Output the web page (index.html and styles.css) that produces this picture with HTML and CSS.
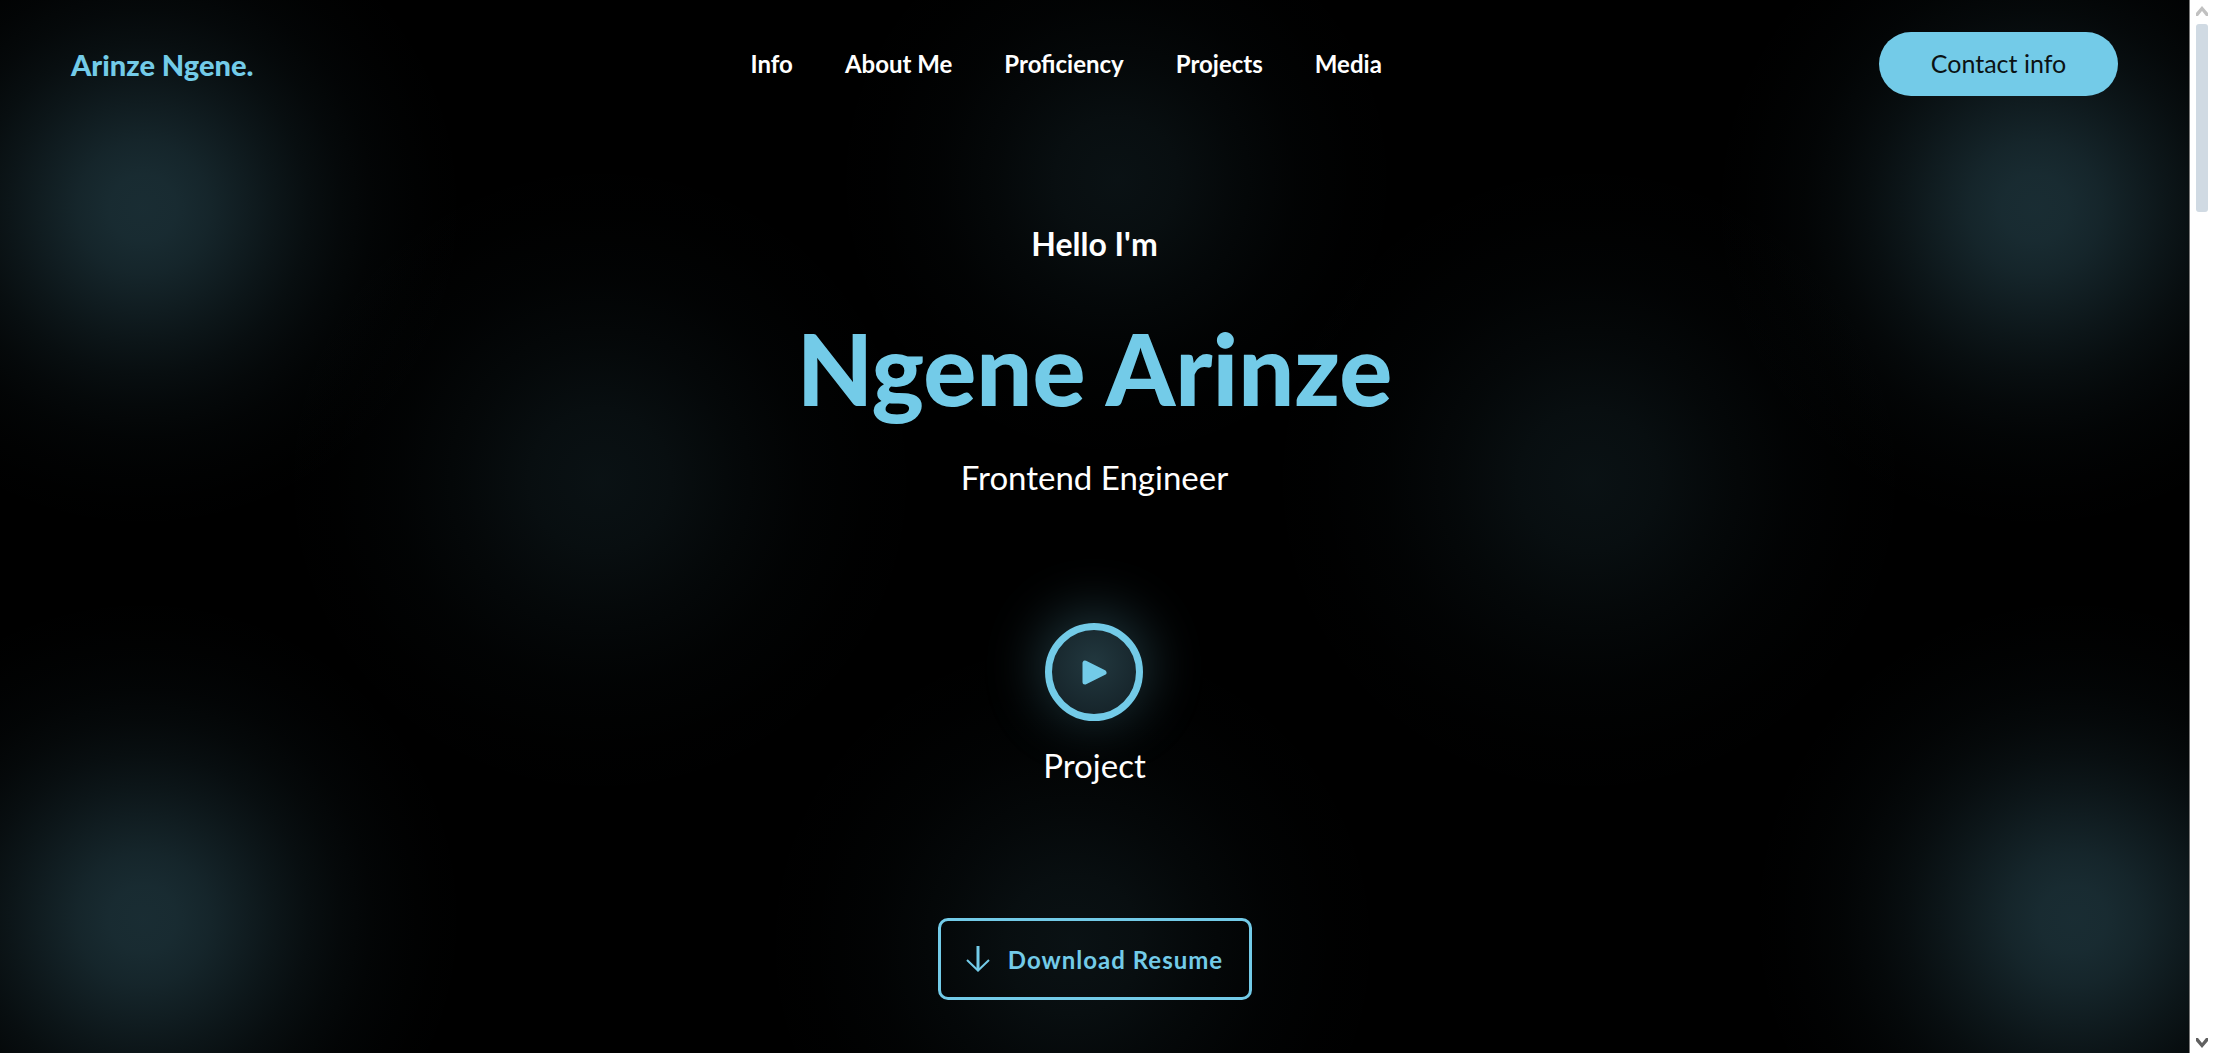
FILE: index.html
```html
<!DOCTYPE html>
<html lang="en">
<head>
<meta charset="utf-8">
<meta name="viewport" content="width=device-width, initial-scale=1">
<title>Arinze Ngene</title>
<link rel="stylesheet" href="styles.css">
</head>
<body>
<div class="page">
  <header class="header">
    <a class="logo" href="#home">Arinze Ngene.</a>
    <nav class="nav" aria-label="Main">
      <a href="#info">Info</a>
      <a href="#about">About Me</a>
      <a href="#proficiency">Proficiency</a>
      <a href="#projects">Projects</a>
      <a href="#media">Media</a>
    </nav>
    <button class="contact" type="button">Contact info</button>
  </header>
  <main class="hero" id="home">
    <p class="greeting">Hello I'm</p>
    <h1 class="name">Ngene Arinze</h1>
    <p class="role">Frontend Engineer</p>
    <a class="project" href="#projects">
      <span class="play">
        <svg width="28" height="26" viewBox="0 0 28 26" aria-hidden="true"><path d="M5 4v19L24 13.5z" fill="currentColor" stroke="currentColor" stroke-width="5" stroke-linejoin="round"/></svg>
      </span>
      <span class="project-label">Project</span>
    </a>
    <button class="download" type="button">
      <svg width="24" height="28" viewBox="0 0 24 28" fill="none" stroke="currentColor" aria-hidden="true"><path d="M12 1v24" stroke-width="3"/><path d="M1 15l11 10.5L23 15" stroke-width="2"/></svg>
      <span>Download Resume</span>
    </button>
  </main>
</div>
<div class="scrollbar" aria-hidden="true">
  <svg class="arrow arrow-up" width="12" height="10" viewBox="0 0 12 10"><path d="M0 7L6 0l6 7v3H10L6 5 2 10H0z"/></svg>
  <span class="thumb"></span>
  <svg class="arrow" width="12" height="10" viewBox="0 0 12 10"><path d="M0 3l6 7 6-7V0H10L6 5 2 0H0z"/></svg>
</div>
</body>
</html>
```
FILE: styles.css
```css
:root {
  --accent: #73cbe8;
  --strong: rgb(115 203 232 / .22) 0, rgb(115 203 232 / .21) 10%, rgb(115 203 232 / .184) 20%,
    rgb(115 203 232 / .147) 30%, rgb(115 203 232 / .107) 40%, rgb(115 203 232 / .071) 50%,
    rgb(115 203 232 / .043) 60%, rgb(115 203 232 / .024) 70%, rgb(115 203 232 / .012) 80%,
    rgb(115 203 232 / .005) 90%, transparent 100%;
  --faint: rgb(115 203 232 / .085) 0, rgb(115 203 232 / .069) 20%, rgb(115 203 232 / .038) 40%,
    rgb(115 203 232 / .015) 60%, rgb(115 203 232 / .004) 80%, transparent 100%;
}

* { box-sizing: border-box; }

body {
  margin: 0;
  min-height: 100vh;
  display: flex;
  background: #fff;
  color: #fff;
  font-family: Lato, "Liberation Sans", sans-serif;
}

a { color: inherit; text-decoration: none; }
button { font: inherit; cursor: pointer; }
p, h1 { margin: 0; }

.page {
  flex: 1;
  border-right: 1px solid #777;
  background:
    radial-gradient(circle 330px at 143px 208px, var(--strong)),
    radial-gradient(circle 330px at calc(100% - 154px) 208px, var(--strong)),
    radial-gradient(circle 330px at 143px calc(100% - 135px), var(--strong)),
    radial-gradient(circle 330px at calc(100% - 116px) calc(100% - 135px), var(--strong)),
    radial-gradient(circle 300px at 51% 180px, var(--faint)),
    radial-gradient(circle 340px at 600px 480px, var(--faint)),
    radial-gradient(circle 340px at calc(100% - 600px) 480px, var(--faint)),
    radial-gradient(circle 330px at 49% calc(100% - 110px), var(--faint)),
    #000;
}

.header {
  display: flex;
  align-items: center;
  justify-content: space-between;
  height: 128px;
  padding: 0 71px;
}

.logo { color: var(--accent); font-size: 29px; font-weight: 900; }
.nav { display: flex; gap: 52px; padding-bottom: 2px; font-size: 24px; font-weight: 700; }

.contact {
  width: 239px;
  height: 64px;
  padding: 0 0 2px;
  border: 0;
  border-radius: 32px;
  background: var(--accent);
  color: #0b1214;
  font-size: 25px;
}

.hero {
  display: flex;
  flex-direction: column;
  align-items: center;
  padding: 92px 24px 54px;
}

.greeting { font-size: 32px; line-height: 48px; font-weight: 700; }
.name { margin-top: 40px; color: var(--accent); font-size: 99px; line-height: 120px; font-weight: 900; }
.role { margin-top: 25px; font-size: 33px; line-height: 48px; }

.project {
  display: flex;
  flex-direction: column;
  align-items: center;
  gap: 20px;
  margin-top: 122px;
  font-size: 33px;
  line-height: 48px;
}

.play {
  display: flex;
  align-items: center;
  justify-content: center;
  width: 98px;
  height: 98px;
  border: 7px solid var(--accent);
  border-radius: 50%;
  background: radial-gradient(circle at 50% 40%, #22383f, #142127 90%);
  box-shadow: 0 -6px 56px 6px rgb(115 203 232 / .26);
  color: var(--accent);
}

.download {
  display: flex;
  align-items: center;
  justify-content: center;
  gap: 18px;
  width: 314px;
  height: 82px;
  margin-top: 129px;
  border: 3px solid var(--accent);
  border-radius: 10px;
  background: transparent;
  color: var(--accent);
  font-size: 24px;
  font-weight: 700;
  letter-spacing: 1px;
}

.scrollbar {
  display: flex;
  flex-direction: column;
  align-items: center;
  width: 24px;
  padding: 6px 0;
  background: #fff;
}

.arrow { fill: #606060; }
.arrow-up { fill: #c1c1c1; }
.thumb { width: 12px; height: 188px; margin: 8px 0 auto; border-radius: 3px; background: #d0dae3; }
```
